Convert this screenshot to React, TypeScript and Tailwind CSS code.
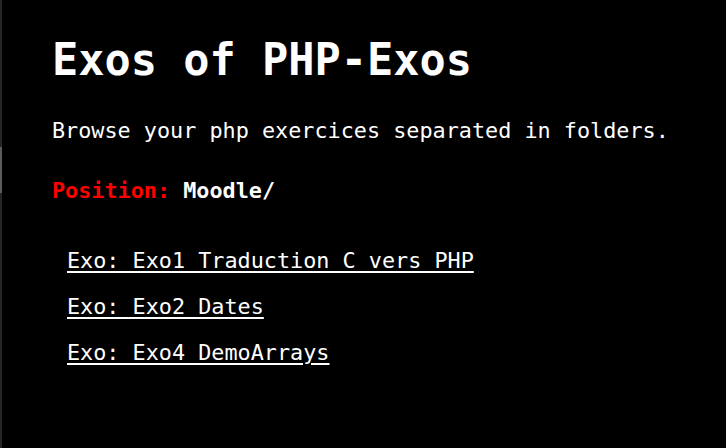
export default function App() {
  const mono = { fontFamily: '"DejaVu Sans Mono", "Liberation Mono", monospace' };
  const links = ["Exo: Exo1 Traduction C vers PHP", "Exo: Exo2 Dates", "Exo: Exo4 DemoArrays"];
  return (
    <div className="flex h-[448px] w-[726px] overflow-hidden bg-black text-white" style={mono}>
      <div className="flex w-[2px] flex-col bg-[#262626]">
        <div className="h-[147px] bg-[#23262a]" />
        <div className="h-[46px] bg-[#5c5c5c]" />
      </div>
      <div className="flex flex-col pl-[50px]">
        <h1 className="mt-[34px] text-[43.6px] font-bold leading-[52px]">Exos of PHP-Exos</h1>
        <p className="mt-[31px] text-[21.8px] leading-[28px]">Browse your php exercices separated in folders.</p>
        <p className="mt-[32px] text-[21.8px] font-bold leading-[28px]">
          <span className="text-[#ff0000]">Position:</span> Moodle/
        </p>
        <ul className="mt-[42px] flex flex-col gap-[18px] pl-[15px]">
          {links.map((l) => (
            <li key={l} className="text-[21.8px] leading-[28px]">
              <a href="#" className="underline decoration-2 underline-offset-[3px]">{l}</a>
            </li>
          ))}
        </ul>
      </div>
    </div>
  );
}
